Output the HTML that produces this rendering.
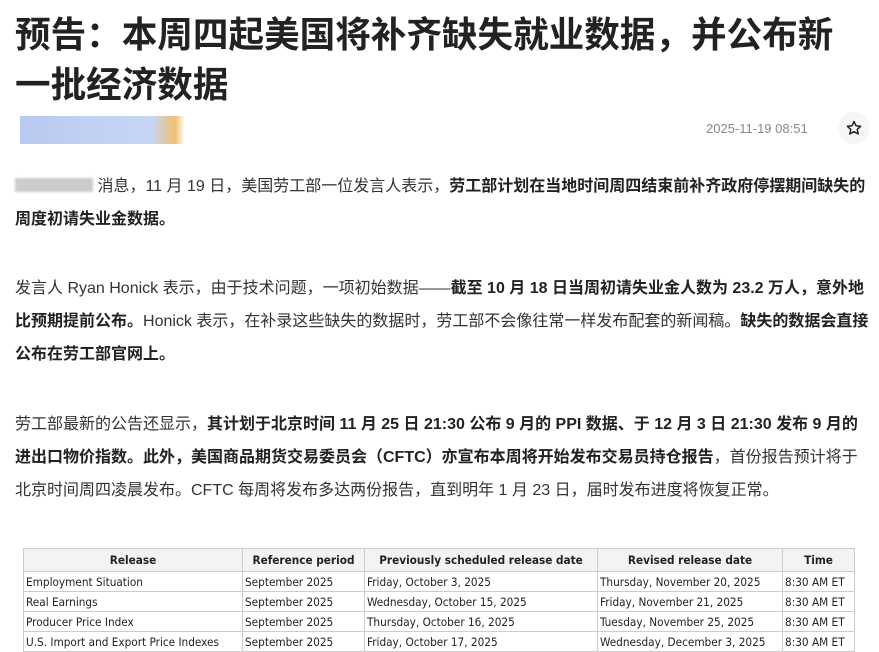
<!DOCTYPE html>
<html><head><meta charset="utf-8"><style>
body{margin:0;background:#fff;width:879px;height:650px;overflow:hidden;font-family:"Liberation Sans","Noto Sans CJK SC",sans-serif;color:#333}
h1{position:absolute;left:15px;top:10px;margin:0;font-size:35.6px;line-height:50px;font-weight:bold;color:#222;white-space:nowrap}
.src{position:absolute;left:20px;top:116px;width:165px;height:28px;background:linear-gradient(90deg,#b9c9ef,#c8d6f5 80%,#f0c070 94%,#fff 100%)}
.date{position:absolute;left:706px;top:121px;font-size:13px;color:#888}
.star{position:absolute;left:838px;top:112px;width:32px;height:32px;border-radius:50%;background:#f6f6f6}
p{position:absolute;left:15px;margin:0;font-size:16px;line-height:33px;white-space:nowrap}
b{color:#222}
.blur{display:inline-block;width:78px;height:14px;background:#ccc;vertical-align:-1px;filter:blur(1px)}
table{position:absolute;left:23px;top:548px;width:831px;table-layout:fixed;border-collapse:collapse;font-family:"DejaVu Sans Condensed","Liberation Sans Narrow","Liberation Sans",sans-serif;font-size:11.7px;color:#222}
td,th{border:1px solid #ccc;padding:0 2px;height:19px;white-space:nowrap;overflow:hidden;text-align:left}
th{height:22px;background:#f3f3f3;text-align:center;font-weight:bold}
</style></head><body>
<h1>预告：本周四起美国将补齐缺失就业数据，并公布新<br>一批经济数据</h1>
<div class="src"></div>
<div class="date">2025-11-19 08:51</div>
<div class="star"><svg width="32" height="32" viewBox="0 0 32 32"><path d="M16 9.5l2 4.3 4.6.5-3.4 3.1 1 4.6L16 19.7 11.8 22l1-4.6-3.4-3.1 4.6-.5z" fill="none" stroke="#222" stroke-width="1.5" stroke-linejoin="round"/></svg></div>
<p style="top:170px"><span class="blur"></span> 消息，11 月 19 日，美国劳工部一位发言人表示，<b>劳工部计划在当地时间周四结束前补齐政府停摆期间缺失的</b><br><b>周度初请失业金数据。</b></p>
<p style="top:272px">发言人 Ryan Honick 表示，由于技术问题，一项初始数据——<b>截至 10 月 18 日当周初请失业金人数为 23.2 万人，意外地</b><br><b>比预期提前公布。</b>Honick 表示，在补录这些缺失的数据时，劳工部不会像往常一样发布配套的新闻稿。<b>缺失的数据会直接</b><br><b>公布在劳工部官网上。</b></p>
<p style="top:408px">劳工部最新的公告还显示，<b>其计划于北京时间 11 月 25 日 21:30 公布 9 月的 PPI 数据、于 12 月 3 日 21:30 发布 9 月的</b><br><b>进出口物价指数。此外，美国商品期货交易委员会（CFTC）亦宣布本周将开始发布交易员持仓报告</b>，首份报告预计将于<br>北京时间周四凌晨发布。CFTC 每周将发布多达两份报告，直到明年 1 月 23 日，届时发布进度将恢复正常。</p>
<table>
<colgroup><col style="width:219px"><col style="width:122px"><col style="width:233px"><col style="width:185px"><col style="width:72px"></colgroup>
<tr><th>Release</th><th>Reference period</th><th>Previously scheduled release date</th><th>Revised release date</th><th>Time</th></tr>
<tr><td>Employment Situation</td><td>September 2025</td><td>Friday, October 3, 2025</td><td>Thursday, November 20, 2025</td><td>8:30 AM ET</td></tr>
<tr><td>Real Earnings</td><td>September 2025</td><td>Wednesday, October 15, 2025</td><td>Friday, November 21, 2025</td><td>8:30 AM ET</td></tr>
<tr><td>Producer Price Index</td><td>September 2025</td><td>Thursday, October 16, 2025</td><td>Tuesday, November 25, 2025</td><td>8:30 AM ET</td></tr>
<tr><td>U.S. Import and Export Price Indexes</td><td>September 2025</td><td>Friday, October 17, 2025</td><td>Wednesday, December 3, 2025</td><td>8:30 AM ET</td></tr>
</table>
</body></html>
